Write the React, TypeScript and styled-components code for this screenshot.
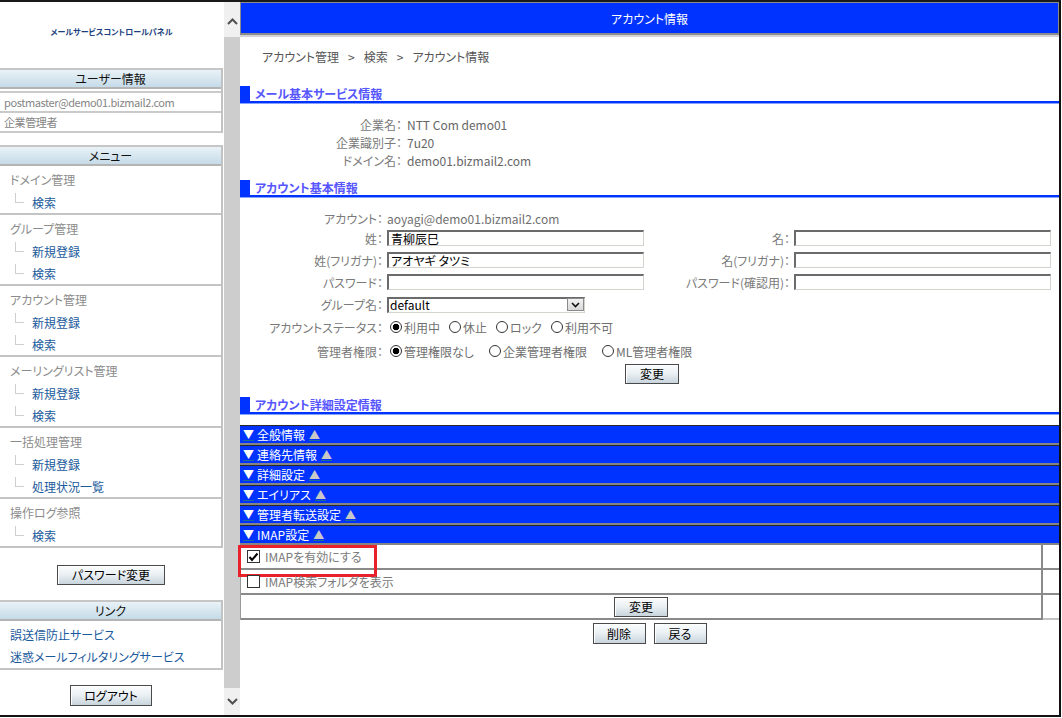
import styled, { createGlobalStyle } from "styled-components";

const GlobalStyle = createGlobalStyle`
  html, body { margin: 0; padding: 0; background: #fff; }
  body {
    font-family: "Noto Sans CJK JP", "Noto Sans", sans-serif;
    font-size: 12px;
    font-feature-settings: "palt";
    color: #666;
  }
  * { box-sizing: border-box; }
  input, select, button { font-family: inherit; font-feature-settings: "palt"; }
`;

const menuGroups = [
  { title: "ドメイン管理", items: ["検索"] },
  { title: "グループ管理", items: ["新規登録", "検索"] },
  { title: "アカウント管理", items: ["新規登録", "検索"] },
  { title: "メーリングリスト管理", items: ["新規登録", "検索"] },
  { title: "一括処理管理", items: ["新規登録", "処理状況一覧"] },
  { title: "操作ログ参照", items: ["検索"] },
];

const sections = ["全般情報", "連絡先情報", "詳細設定", "エイリアス", "管理者転送設定", "IMAP設定"];

const App = () => {
  return (
    <>
      <GlobalStyle />
      <Frame>
        <Sidebar>
          <Logo>メールサービスコントロールパネル</Logo>
          <SideBox>
            <SideHeader>ユーザー情報</SideHeader>
            <UserList>
              <UserRow>postmaster@demo01.bizmail2.com</UserRow>
              <UserRow>企業管理者</UserRow>
            </UserList>
          </SideBox>
          <SideBox $mt={12}>
            <SideHeader>メニュー</SideHeader>
            {menuGroups.map((g) => (
              <MenuGroup key={g.title}>
                <GroupTitle>{g.title}</GroupTitle>
                {g.items.map((it) => (
                  <MenuLink key={it} href="#">{it}</MenuLink>
                ))}
              </MenuGroup>
            ))}
          </SideBox>
          <SideButton $w={108} $mt={17}>パスワード変更</SideButton>
          <SideBox $mt={15}>
            <SideHeader>リンク</SideHeader>
            <LinkList>
              <LinkItem href="#">誤送信防止サービス</LinkItem>
              <LinkItem href="#">迷惑メールフィルタリングサービス</LinkItem>
            </LinkList>
          </SideBox>
          <SideButton $w={82} $mt={15} $h={21}>ログアウト</SideButton>
        </Sidebar>

        <Scroll>
          <ScrollEnd $h={35} $pt={4}>
            <svg width="11" height="7" viewBox="0 0 11 7">
              <path d="M1 6 L5.5 1.5 L10 6" stroke="#505050" strokeWidth="2" fill="none" />
            </svg>
          </ScrollEnd>
          <ScrollThumb />
          <ScrollEnd $h={27}>
            <svg width="11" height="7" viewBox="0 0 11 7">
              <path d="M1 1 L5.5 5.5 L10 1" stroke="#505050" strokeWidth="2" fill="none" />
            </svg>
          </ScrollEnd>
        </Scroll>

        <Main>
          <TitleBar>アカウント情報</TitleBar>
          <Breadcrumb>
            アカウント管理<Sep>&gt;</Sep>検索<Sep>&gt;</Sep>アカウント情報
          </Breadcrumb>

          <SectionHead $mt={20}>メール基本サービス情報</SectionHead>
          <InfoGrid>
            <InfoLabel>企業名：</InfoLabel>
            <span>NTT Com demo01</span>
            <InfoLabel>企業識別子：</InfoLabel>
            <span>7u20</span>
            <InfoLabel>ドメイン名：</InfoLabel>
            <span>demo01.bizmail2.com</span>
          </InfoGrid>

          <SectionHead $mt={11}>アカウント基本情報</SectionHead>
          <FormGrid>
            <FieldLabel>アカウント：</FieldLabel>
            <Wide>aoyagi@demo01.bizmail2.com</Wide>

            <FieldLabel>姓：</FieldLabel>
            <TextInput defaultValue="青柳辰巳" />
            <FieldLabel>名：</FieldLabel>
            <TextInput defaultValue="" />

            <FieldLabel>姓(フリガナ)：</FieldLabel>
            <TextInput defaultValue="アオヤギ タツミ" />
            <FieldLabel>名(フリガナ)：</FieldLabel>
            <TextInput defaultValue="" />

            <FieldLabel>パスワード：</FieldLabel>
            <TextInput type="password" defaultValue="" />
            <FieldLabel>パスワード(確認用)：</FieldLabel>
            <TextInput type="password" defaultValue="" />

            <FieldLabel>グループ名：</FieldLabel>
            <Wide>
              <SelectWrap>
                <Select defaultValue="default">
                  <option value="default">default</option>
                </Select>
                <SelectArrow>
                  <svg width="9" height="6" viewBox="0 0 9 6">
                    <path d="M1 1 L4.5 4.5 L8 1" stroke="#111" strokeWidth="1.6" fill="none" />
                  </svg>
                </SelectArrow>
              </SelectWrap>
            </Wide>

            <FieldLabel>アカウントステータス：</FieldLabel>
            <Wide>
              {["利用中", "休止", "ロック", "利用不可"].map((s, i) => (
                <Option key={s}>
                  <Radio name="status" defaultChecked={i === 0} />
                  {s}
                </Option>
              ))}
            </Wide>

            <FieldLabel>管理者権限：</FieldLabel>
            <Wide>
              {["管理権限なし", "企業管理者権限", "ML管理者権限"].map((s, i) => (
                <Option key={s} $gap={12}>
                  <Radio name="role" defaultChecked={i === 0} />
                  {s}
                </Option>
              ))}
            </Wide>

            <FullRow>
              <Button $w={54}>変更</Button>
            </FullRow>
          </FormGrid>

          <SectionHead $mt={12}>アカウント詳細設定情報</SectionHead>
          <Accordion>
            {sections.map((s) => (
              <AccBar key={s}>
                <Arrow>▼</Arrow>
                {s}
                <Arrow $up>▲</Arrow>
              </AccBar>
            ))}
          </Accordion>

          <ImapTable>
            <ImapRow>
              <ImapCell $main>
                <CheckBox>
                  <svg width="11" height="10" viewBox="0 0 11 10">
                    <path d="M1.5 5 L4 8 L9.5 1.5" stroke="#000" strokeWidth="2" fill="none" />
                  </svg>
                </CheckBox>
                IMAPを有効にする
                <Highlight />
              </ImapCell>
              <ImapCell />
            </ImapRow>
            <ImapRow>
              <ImapCell $main>
                <CheckBox />
                IMAP検索フォルダを表示
              </ImapCell>
              <ImapCell />
            </ImapRow>
            <ImapRow>
              <ImapCell $main $center>
                <Button $w={54}>変更</Button>
              </ImapCell>
              <ImapCell $light />
            </ImapRow>
          </ImapTable>

          <ButtonRow>
            <Button $w={53} $h={21}>削除</Button>
            <Button $w={53} $h={21}>戻る</Button>
          </ButtonRow>
        </Main>
      </Frame>
    </>
  );
};

export default App;

const Frame = styled.div`
  width: 1061px;
  height: 717px;
  border-top: 2px solid #1a1a1a;
  border-right: 2px solid #111;
  border-bottom: 2px solid #111;
  display: grid;
  grid-template-columns: 223px 17px 1fr;
  overflow: hidden;
`;

const Sidebar = styled.aside`
  display: flex;
  flex-direction: column;
`;

const Logo = styled.div`
  height: 58px;
  margin-bottom: 8px;
  display: flex;
  align-items: center;
  justify-content: center;
  font-size: 8px;
  font-weight: bold;
  color: #1d3f7e;
`;

const SideBox = styled.div<{ $mt?: number }>`
  margin-top: ${(p) => p.$mt ?? 0}px;
  border-right: 2px solid #c2c2c2;
`;

const SideHeader = styled.div`
  height: 21px;
  line-height: 17px;
  text-align: center;
  color: #111;
  border-top: 2px solid #c6c6c6;
  border-bottom: 2px solid #b4b4b4;
  background: linear-gradient(#e9f2f7, #c5dbe8);
`;

const UserList = styled.div`
  margin-top: 2px;
  border-top: 2px solid #cacaca;
`;

const UserRow = styled.div`
  height: 20px;
  line-height: 18px;
  padding-left: 4px;
  font-size: 11px;
  letter-spacing: -0.4px;
  color: #858585;
  border-bottom: 2px solid #cacaca;
  white-space: nowrap;
`;

const MenuGroup = styled.div`
  padding-top: 3px;
  border-bottom: 2px solid #c4c4c4;
`;

const GroupTitle = styled.div`
  height: 22px;
  line-height: 22px;
  padding-left: 10px;
  color: #8c8c8c;
`;

const MenuLink = styled.a`
  height: 22px;
  display: flex;
  align-items: center;
  padding-left: 15px;
  color: #1a5a9c;
  text-decoration: none;

  &::before {
    content: "";
    width: 8px;
    height: 9px;
    border-left: 1px solid #cfcfcf;
    border-bottom: 1px solid #cfcfcf;
    margin-right: 8px;
    transform: translateY(-4px);
  }
`;

const LinkList = styled.div`
  padding-top: 3px;
  border-bottom: 2px solid #c4c4c4;
`;

const LinkItem = styled.a`
  display: block;
  height: 22px;
  line-height: 22px;
  padding-left: 10px;
  color: #1a5a9c;
  text-decoration: none;
  white-space: nowrap;
`;

const Button = styled.button<{ $w: number; $h?: number }>`
  width: ${(p) => p.$w}px;
  height: ${(p) => p.$h ?? 20}px;
  padding: 0;
  border: 1px solid #4a4a4a;
  background: linear-gradient(#fbfdfe, #e9eff3 50%, #c8d4dc);
  box-shadow: inset 1px 1px 0 #fff;
  font-size: 12px;
  line-height: 1;
  color: #000;
`;

const SideButton = styled(Button)<{ $mt: number }>`
  align-self: center;
  margin-top: ${(p) => p.$mt}px;
  margin-right: 1px;
`;

const Scroll = styled.div`
  margin-left: 1px;
  display: flex;
  flex-direction: column;
`;

const ScrollEnd = styled.div<{ $h: number; $pt?: number }>`
  height: ${(p) => p.$h}px;
  padding-top: ${(p) => p.$pt ?? 0}px;
  background: #f0f0f0;
  display: flex;
  align-items: center;
  justify-content: center;
`;

const ScrollThumb = styled.div`
  flex: 1;
  background: #cdcdcd;
`;

const Main = styled.main`
  display: flex;
  flex-direction: column;
  min-width: 0;
`;

const TitleBar = styled.div`
  height: 33px;
  border: 1px solid #8c8c8c;
  border-bottom-width: 2px;
  box-shadow: 0 2px 0 #d4d4d4;
  background: #0033ff;
  color: #fff;
  display: flex;
  align-items: center;
  justify-content: center;
`;

const Breadcrumb = styled.div`
  margin-top: 13px;
  height: 18px;
  line-height: 18px;
  padding-left: 22px;
  color: #555;
`;

const Sep = styled.span`
  margin: 0 9px;
`;

const SectionHead = styled.h2<{ $mt: number }>`
  margin: ${(p) => p.$mt}px 0 0;
  height: 17px;
  display: flex;
  align-items: center;
  border-bottom: 2px solid #0033ff;
  box-shadow: 0 1px 0 #86a3ff;
  font-size: 12px;
  font-weight: bold;
  color: #5656ff;

  &::before {
    content: "";
    align-self: stretch;
    width: 10px;
    background: #0033ff;
    margin-right: 5px;
  }
`;

const InfoGrid = styled.div`
  margin-top: 12px;
  display: grid;
  grid-template-columns: 162px 1fr;
  grid-auto-rows: 18px;
  column-gap: 5px;
  align-items: center;
`;

const InfoLabel = styled.span`
  text-align: right;
  color: #7a7a7a;
`;

const FormGrid = styled.div`
  margin-top: 12px;
  display: grid;
  grid-template-columns: 147px 257px 150px 257px;
  grid-template-rows: 18px 22px 22px 22px 22px 24px 24px 22px;
  align-items: center;
`;

const FieldLabel = styled.span`
  text-align: right;
  padding-right: 4px;
  color: #7a7a7a;
  white-space: nowrap;
`;

const Wide = styled.div`
  grid-column: 2 / span 3;
  display: flex;
  align-items: center;
  color: #707070;
`;

const FullRow = styled.div`
  grid-column: 1 / -1;
  display: flex;
  justify-content: center;
  padding-left: 13px;
`;

const TextInput = styled.input`
  width: 257px;
  height: 16px;
  padding: 0 2px;
  border-style: solid;
  border-width: 2px 1px 1px 2px;
  border-color: #6b6b6b #d6d3ce #d6d3ce #6b6b6b;
  font-size: 12px;
  color: #000;
  background: #fff;
  outline: none;
`;

const SelectWrap = styled.div`
  position: relative;
  width: 198px;
  height: 16px;
`;

const Select = styled.select`
  appearance: none;
  width: 100%;
  height: 100%;
  padding: 0 0 0 1px;
  border-style: solid;
  border-width: 2px 1px 1px 2px;
  border-color: #6b6b6b #d6d3ce #d6d3ce #6b6b6b;
  border-radius: 0;
  background: #fff;
  font-size: 12px;
  line-height: 12px;
  color: #000;
`;

const SelectArrow = styled.span`
  position: absolute;
  right: 1px;
  top: 2px;
  width: 17px;
  height: 13px;
  background: linear-gradient(#f2f2f2, #d8d8d8);
  border: 1px solid #8a8a8a;
  display: flex;
  align-items: center;
  justify-content: center;
  pointer-events: none;
`;

const Option = styled.label<{ $gap?: number }>`
  display: inline-flex;
  align-items: center;
  margin-right: ${(p) => p.$gap ?? 6}px;
  color: #707070;
`;

const Radio = styled.input.attrs({ type: "radio" })`
  appearance: none;
  width: 12px;
  height: 12px;
  margin: 0 2px 0 3px;
  border: 1px solid #333;
  border-radius: 50%;
  background: #fff;

  &:checked {
    background: radial-gradient(circle, #000 0 3px, #fff 3.6px);
  }
`;

const Accordion = styled.div`
  margin-top: 11px;
`;

const AccBar = styled.div`
  height: 20px;
  border-top: 1px solid #2a2a2a;
  border-bottom: 2px solid #858585;
  background: #0033ff;
  color: #fff;
  display: flex;
  align-items: center;
  padding-left: 3px;
`;

const Arrow = styled.span<{ $up?: boolean }>`
  font-size: 11px;
  line-height: 11px;
  color: ${(p) => (p.$up ? "#c8c8c8" : "#fff")};
  border-bottom: 1px solid #1d6b8f;
  margin: ${(p) => (p.$up ? "0 0 0 4px" : "0 3px 0 0")};
`;

const ImapTable = styled.div`
  border-left: 1px solid #999;
`;

const ImapRow = styled.div`
  display: grid;
  grid-template-columns: 802px 1fr;
`;

const ImapCell = styled.div<{ $main?: boolean; $center?: boolean; $light?: boolean }>`
  position: relative;
  height: 25px;
  display: flex;
  align-items: center;
  justify-content: ${(p) => (p.$center ? "center" : "flex-start")};
  padding-left: ${(p) => (p.$center ? 0 : 6)}px;
  border-bottom: 2px solid ${(p) => (p.$light ? "#c4c4c4" : "#8a8a8a")};
  border-right: ${(p) => (p.$main ? "2px solid #8a8a8a" : "none")};
  color: #7a7a7a;
`;

const CheckBox = styled.span`
  width: 13px;
  height: 13px;
  margin-right: 5px;
  border: 1px solid #333;
  background: #fff;
  display: inline-flex;
  align-items: center;
  justify-content: center;
`;

const Highlight = styled.span`
  position: absolute;
  left: -3px;
  top: 0;
  width: 139px;
  height: 32px;
  border: 3px solid #e8212b;
  pointer-events: none;
`;

const ButtonRow = styled.div`
  margin-top: 3px;
  display: flex;
  justify-content: center;
  gap: 8px;
`;
